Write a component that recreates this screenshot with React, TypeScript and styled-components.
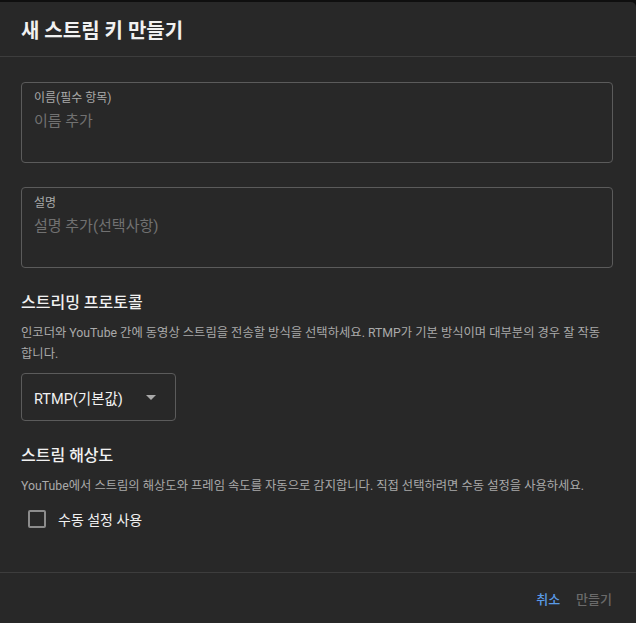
import React, { FC } from 'react'
import styled, { createGlobalStyle } from 'styled-components'

const GlobalStyle = createGlobalStyle`
	html, body {
		margin: 0;
		padding: 0;
		background: #0f0f0f;
	}
	body {
		font-family: Roboto, 'Noto Sans CJK KR', sans-serif;
	}
`

const Dialog = styled.div`
	margin-top: 2px;
	width: 636px;
	height: 621px;
	background: #282828;
	border-radius: 0 5px 0 0;
	display: flex;
	flex-direction: column;
	color: #f1f1f1;
`

const Header = styled.div`
	height: 54px;
	padding: 0 21px;
	display: flex;
	align-items: center;
	border-bottom: 1px solid #3d3d3d;
`

const Title = styled.h1`
	margin: 0;
	font-size: 20px;
	font-weight: 700;
	color: #f1f1f1;
`

const Body = styled.div`
	flex: 1;
	padding: 25px 23px 0 21px;
	display: flex;
	flex-direction: column;
`

const Field = styled.div`
	height: 81px;
	box-sizing: border-box;
	border: 1px solid #5b5b5b;
	border-radius: 4px;
	padding: 6px 12px;
	margin-bottom: 24px;
`

const FieldLabel = styled.div`
	font-size: 12px;
	line-height: 18px;
	color: #aaaaaa;
`

const Placeholder = styled.div`
	margin-top: 3px;
	font-size: 15px;
	line-height: 22px;
	color: #717171;
`

const SectionTitle = styled.h2`
	margin: 0;
	font-size: 16px;
	font-weight: 500;
	line-height: 22px;
	color: #f1f1f1;
`

const Description = styled.p`
	margin: 9px 0 0;
	padding-right: 8px;
	font-size: 12.3px;
	line-height: 21px;
	color: #aaaaaa;
`

const Select = styled.div`
	margin-top: 8px;
	width: 155px;
	height: 48px;
	box-sizing: border-box;
	border: 1px solid #5b5b5b;
	border-radius: 4px;
	padding: 0 19px 0 12px;
	display: flex;
	align-items: center;
	justify-content: space-between;
	font-size: 14.5px;
	color: #f1f1f1;
	margin-bottom: 24px;
`

const Caret = styled.span`
	width: 0;
	height: 0;
	border-left: 5px solid transparent;
	border-right: 5px solid transparent;
	border-top: 5px solid #aaaaaa;
`

const CheckRow = styled.label`
	margin-top: 12px;
	margin-left: 7px;
	display: flex;
	align-items: center;
	gap: 12px;
	font-size: 14px;
	color: #f1f1f1;
`

const CheckBox = styled.span`
	width: 18px;
	height: 18px;
	box-sizing: border-box;
	border: 2px solid #8c8c8c;
	border-radius: 2px;
`

const Footer = styled.div`
	height: 50px;
	border-top: 1px solid #3d3d3d;
	display: flex;
	align-items: center;
	justify-content: flex-end;
	gap: 16px;
	padding: 0 24px 0 0;
`

const TextButton = styled.button<{ $active?: boolean }>`
	background: none;
	border: none;
	padding: 0;
	font-family: inherit;
	font-size: 13px;
	font-weight: 500;
	color: ${({ $active }) => ($active ? '#5a9ae6' : '#6a6a6a')};
	cursor: pointer;
`

const App: FC = () => (
	<>
		<GlobalStyle />
		<Dialog>
			<Header>
				<Title>새 스트림 키 만들기</Title>
			</Header>
			<Body>
				<Field>
					<FieldLabel>이름(필수 항목)</FieldLabel>
					<Placeholder>이름 추가</Placeholder>
				</Field>
				<Field>
					<FieldLabel>설명</FieldLabel>
					<Placeholder>설명 추가(선택사항)</Placeholder>
				</Field>
				<SectionTitle>스트리밍 프로토콜</SectionTitle>
				<Description>
					인코더와 YouTube 간에 동영상 스트림을 전송할 방식을 선택하세요. RTMP가 기본 방식이며 대부분의 경우 잘 작동합니다.
				</Description>
				<Select>
					<span>RTMP(기본값)</span>
					<Caret />
				</Select>
				<SectionTitle>스트림 해상도</SectionTitle>
				<Description>
					YouTube에서 스트림의 해상도와 프레임 속도를 자동으로 감지합니다. 직접 선택하려면 수동 설정을 사용하세요.
				</Description>
				<CheckRow>
					<CheckBox />
					수동 설정 사용
				</CheckRow>
			</Body>
			<Footer>
				<TextButton $active>취소</TextButton>
				<TextButton>만들기</TextButton>
			</Footer>
		</Dialog>
	</>
)

export default App
